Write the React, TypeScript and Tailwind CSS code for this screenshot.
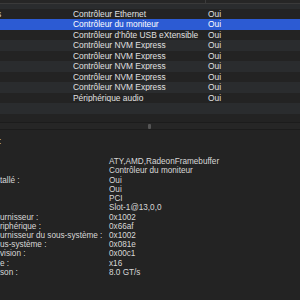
import React from "react";

const rows: { name: string; type: string; val: string }[] = [
  { name: "", type: "", val: "" },
  { name: "s", type: "Contrôleur Ethernet", val: "Oui" },
  { name: "", type: "Contrôleur du moniteur", val: "Oui" },
  { name: "", type: "Contrôleur d’hôte USB eXtensible", val: "Oui" },
  { name: "", type: "Contrôleur NVM Express", val: "Oui" },
  { name: "", type: "Contrôleur NVM Express", val: "Oui" },
  { name: "", type: "Contrôleur NVM Express", val: "Oui" },
  { name: "", type: "Contrôleur NVM Express", val: "Oui" },
  { name: "", type: "Contrôleur NVM Express", val: "Oui" },
  { name: "", type: "Périphérique audio", val: "Oui" },
  { name: "", type: "", val: "" },
  { name: "", type: "", val: "" },
];

const details: [string, string][] = [
  ["", "ATY,AMD,RadeonFramebuffer"],
  ["", "Contrôleur du moniteur"],
  ["tallé :", "Oui"],
  ["", "Oui"],
  ["", "PCI"],
  ["", "Slot-1@13,0,0"],
  ["urnisseur :", "0x1002"],
  ["riphérique :", "0x66af"],
  ["urnisseur du sous-système :", "0x1002"],
  ["us-système :", "0x081e"],
  ["vision :", "0x00c1"],
  ["e :", "x16"],
  ["son :", "8.0 GT/s"],
];

export default function App() {
  return (
    <div
      className="w-[300px] h-[300px] overflow-hidden bg-[#232323] flex flex-col text-[#e0e0e0]"
      style={{ fontFamily: "'Liberation Sans', Arial, sans-serif" }}
    >
      {/* table */}
      <div className="h-[122px] overflow-hidden flex flex-col shrink-0">
        <div className="h-[4px] shrink-0 bg-[#262626] border-b border-[#3a3a3a] flex relative z-10">
          <div className="w-[206px] border-r border-[#3c3c3c]" />
        </div>
        <div className="flex flex-col -mt-[6px]">
          {rows.map((r, i) => {
            const selected = i === 2;
            const bg = selected
              ? "bg-[#2c5bd3]"
              : i % 2 === 0
              ? "bg-[#2a2c2e]"
              : "bg-[#232323]";
            return (
              <div
                key={i}
                className={`h-[10.5px] shrink-0 flex items-center text-[8.4px] leading-none ${bg} ${
                  selected ? "text-white" : ""
                }`}
              >
                <div className="w-[73px] shrink-0 overflow-hidden whitespace-nowrap">
                  <span className="-ml-[3px] inline-block">{r.name}</span>
                </div>
                <div className="w-[135px] shrink-0 whitespace-nowrap overflow-hidden">
                  {r.type}
                </div>
                <div className="whitespace-nowrap">{r.val}</div>
              </div>
            );
          })}
        </div>
      </div>
      {/* splitter */}
      <div className="h-[8px] shrink-0 bg-[#262626] border-t border-[#1c1c1c] border-b flex items-center justify-center">
        <div className="w-[3px] h-[5px] rounded-[1px] bg-[#555555] -ml-[1px]" />
      </div>
      {/* details */}
      <div className="flex flex-col pt-[7.4px] text-[8.2px] text-[#d8d8d8]">
        <div className="h-[9.24px] leading-[9.24px] whitespace-nowrap -ml-[1px]">:</div>
        <div className="h-[10.5px]" />
        <div className="grid grid-cols-[109px_1fr]">
          {details.map(([k, v], i) => (
            <React.Fragment key={i}>
              <div className="h-[9.24px] leading-[9.24px] whitespace-nowrap overflow-hidden">
                <span className="inline-block">{k}</span>
              </div>
              <div className="h-[9.24px] leading-[9.24px] whitespace-nowrap">{v}</div>
            </React.Fragment>
          ))}
        </div>
      </div>
    </div>
  );
}
